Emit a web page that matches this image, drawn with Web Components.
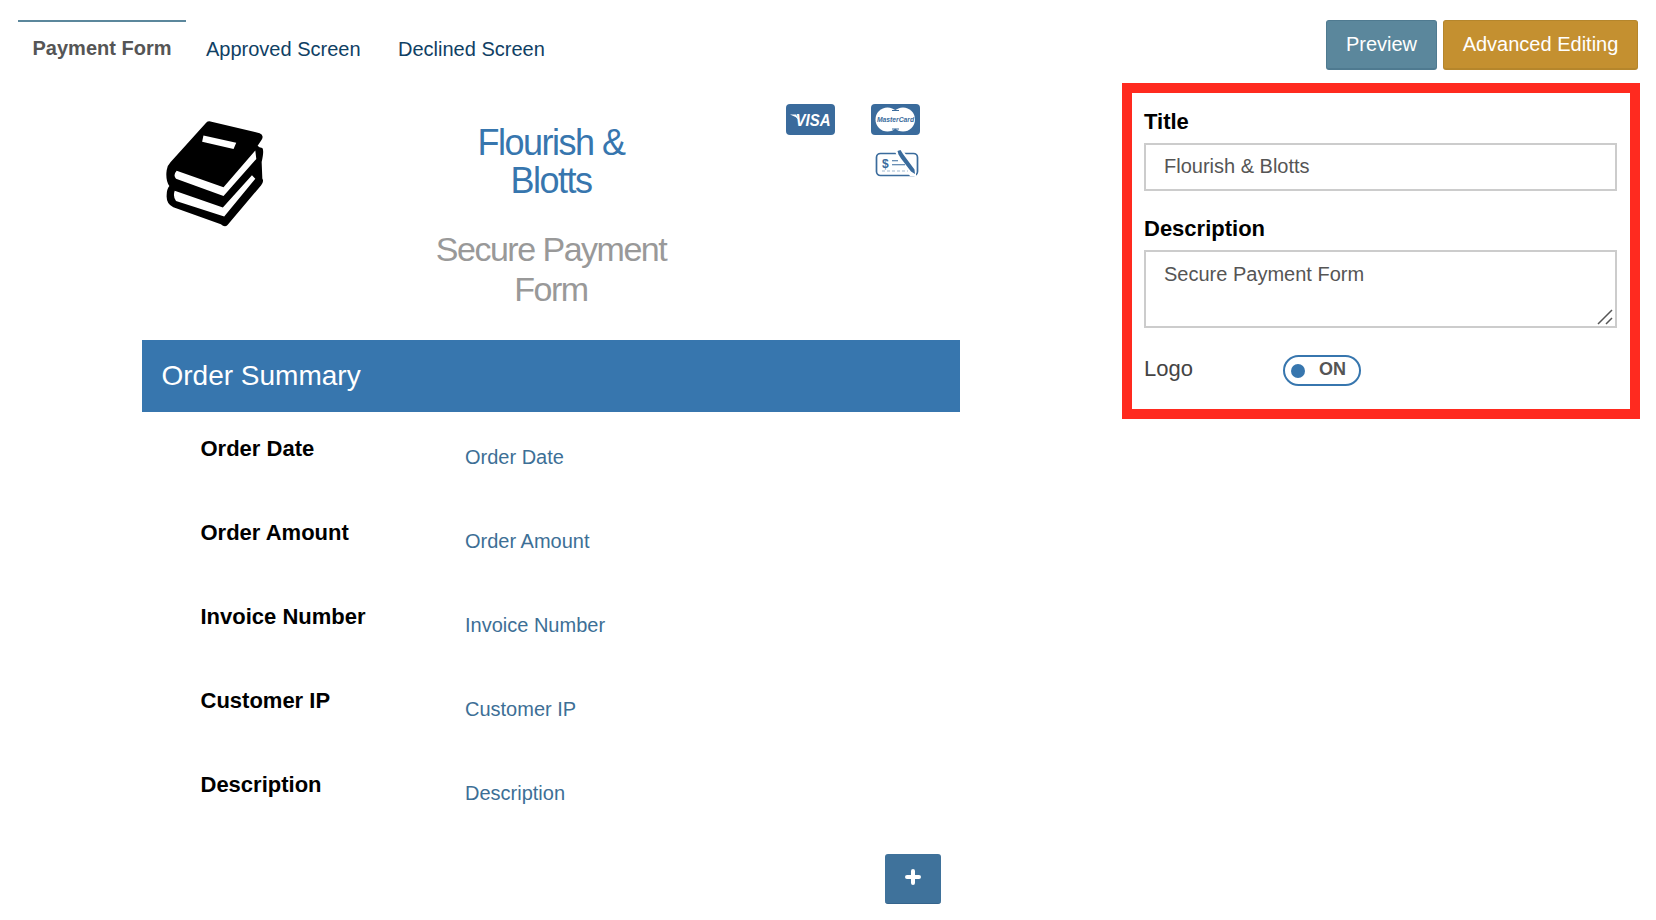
<!doctype html>
<html><head><meta charset="utf-8">
<style>
html,body{margin:0;background:#fff}
body{font-family:"Liberation Sans",Arial,sans-serif;width:1656px;height:920px;overflow:hidden}
</style></head>
<body>
<app-page></app-page>
<script>
function def(name, css, html){
  customElements.define(name, class extends HTMLElement{
    constructor(){super();const r=this.attachShadow({mode:'open'});
      r.innerHTML='<style>'+css+'</style>'+(typeof html==='function'?html(this):html);}
  });
}
def('top-bar',`:host{display:flex;justify-content:space-between;align-items:flex-start;height:83px;box-sizing:border-box;padding:20px 18px 0 18px}`,
`<tab-nav></tab-nav><action-buttons></action-buttons>`);
def('tab-nav',`:host{display:flex;font-size:20px;color:#0f4064;white-space:nowrap}
a{display:block;height:48px;box-sizing:border-box;line-height:27px}
.on{width:168px;border-top:2px solid #5b879c;color:#555;font-weight:bold;text-align:center;padding-top:13px;margin-right:20px;font-size:20px}
.b{margin-left:37.500px;padding-top:16px}.a{padding-top:16px}`,
`<a class="on">Payment Form</a><a class="a">Approved Screen</a><a class="b">Declined Screen</a>`);
def('action-buttons',`:host{display:flex;gap:6px}
button{font:20px "Liberation Sans",Arial,sans-serif;color:#fff;height:50px;border-radius:3px;padding:0;box-sizing:border-box}
.p{width:111px;background:#5b879c;border:1px solid #4f7a90;border-bottom-width:2px}
.a{width:195px;background:#c49030;border:1px solid #b5862c;border-bottom-width:2px}`,
`<button class="p">Preview</button><button class="a">Advanced Editing</button>`);
def('brand-logo',`:host{display:block;padding:37px 0 0 24px}svg{display:block}`,
`<svg width="99" height="107" viewBox="78 58 296 324" preserveAspectRatio="none"><path fill="#000" fill-rule="evenodd" d="M198 66Q204 60 214 63L358 98Q372 103 364 118L352 136Q356 142 366 143Q372 150 364 185L366 235Q372 244 362 256L262 376Q254 384 242 374L100 322Q78 312 80 285Q80 268 88 258Q76 240 80 210Q82 195 92 185ZM110 212L250 262L345 150L348 176L250 288L108 236Q98 225 110 212ZM104 272L248 323L335 225L345 236L252 350L108 303Q98 290 104 272ZM190 105L288 127L280 146L186 124Z"/></svg>`);
def('pay-icons',`:host{display:grid;grid-template-columns:49px 49px;column-gap:36px;row-gap:14px;padding:21px 0 0 99px;align-content:start;justify-items:center}
svg{display:block;overflow:visible}.c{justify-self:end;margin-right:1px}`,
`<svg width="49" height="31" viewBox="0 0 49 31"><rect width="49" height="31" rx="4" fill="#3a6b9c"/><path d="M4 10.500H10L13 16Q9 12 4 10.500Z" fill="#fff"/><text x="9.500" y="22" font-family="Liberation Sans" font-weight="bold" font-style="italic" font-size="16" fill="#fff" textLength="35" lengthAdjust="spacingAndGlyphs">VISA</text></svg>
<svg width="49" height="31" viewBox="0 0 49 31"><rect width="49" height="31" rx="4" fill="#3a6b9c"/><circle cx="16.500" cy="15.500" r="12" fill="#fff"/><circle cx="32" cy="15.500" r="12" fill="#fff"/><path d="M21 6.500H28M21 25H28" stroke="#3a6b9c" stroke-width="1"/><text x="6" y="18" font-family="Liberation Sans" font-weight="bold" font-style="italic" font-size="7.400" fill="#3a6b9c" textLength="37" lengthAdjust="spacingAndGlyphs">MasterCard</text></svg>
<span></span>
<svg class="c" width="44" height="28" viewBox="0 0 44 28"><rect x="1.500" y="4.500" width="41" height="22" rx="4" fill="#fff" stroke="#3a6b9c" stroke-width="1.700"/><path d="M19 0H27L41 20V27H35L24 12Z" fill="#fff"/><path d="M22.500 2L25.500 1L28 5L39.500 20.500L40 25L36 22.500L26 9.500L23.500 5.500Z" fill="#3a6b9c"/><text x="7" y="19" font-family="Liberation Sans" font-weight="bold" font-size="12" fill="#3a6b9c">$</text><path d="M17 11.700H23M17 15.700H30" stroke="#3a6b9c" stroke-width="1.100"/><path d="M7 22H33" stroke="#9db7cf" stroke-width="1" stroke-dasharray="3 2"/></svg>`);
def('brand-title',`:host{display:block;text-align:center;padding-top:40.500px}
h1{margin:0;font-weight:normal;font-size:36px;line-height:38.500px;color:#3776ae;letter-spacing:-1.500px}
h2{margin:28.500px 0 0;font-weight:normal;font-size:34px;line-height:40px;color:#999;letter-spacing:-1.500px}`,
`<h1>Flourish &amp;<br>Blotts</h1><h2>Secure Payment<br>Form</h2>`);
def('form-head',`:host{display:grid;grid-template-columns:repeat(3,1fr);height:257px}`,
`<brand-logo></brand-logo><brand-title></brand-title><pay-icons></pay-icons>`);
def('section-bar',`:host{display:flex;align-items:center;height:72px;box-sizing:border-box;padding:0 0 1px 19.500px;background:#3776ae;color:#fff;font-size:28px}`,`<slot></slot>`);
def('summary-row',`:host{display:grid;grid-template-columns:264px 1fr;height:84px;box-sizing:border-box;padding:22px 0 0 59px}
.l{font-weight:bold;font-size:22px;line-height:30px;color:#000;margin-left:-.5px}.v{font-size:20px;line-height:30px;color:#3d6f96;padding-top:8px}`,
el=>`<div class="l">${el.getAttribute('label')}</div><div class="v">${el.getAttribute('label')}</div>`);
def('add-button',`:host{display:flex;justify-content:flex-end;padding:22px 19px 0 0}
button{width:56px;height:50px;background:#3f729b;border:0;border-bottom:1px solid #35648c;border-radius:3px;padding:0 0 3px;display:flex;align-items:center;justify-content:center}`,
`<button aria-label="Add"><svg width="16" height="16" viewBox="0 0 16 16"><path d="M8 2V14M2 8H14" stroke="#fff" stroke-width="4" stroke-linecap="round"/></svg></button>`);
def('text-box',`:host{display:block;box-sizing:border-box;border:2px solid #ccc;background:#fff;font-size:20px;color:#555;padding:9px 18px;line-height:26px;position:relative}
:host(.i){padding-top:8px}
svg{position:absolute;right:2px;bottom:1px}`,
el=>`<slot></slot>`+(el.hasAttribute('resize')?`<svg width="16" height="16" viewBox="0 0 16 16"><path d="M1 15L15 1M9 15L15 9" stroke="#555" stroke-width="1.500" fill="none"/></svg>`:''));
def('on-toggle',`:host{display:flex;align-items:center;box-sizing:border-box;width:78px;height:31px;border:2px solid #3776ae;border-radius:16px;padding-left:6px;background:#fff;font-weight:bold;font-size:18px;color:#555}
i{width:14px;height:14px;border-radius:50%;background:#3776ae;display:block;margin-right:14px}span{padding-bottom:2px}`,
`<i></i><span>ON</span>`);
def('edit-panel',`:host{display:block;box-sizing:border-box;width:518px;height:336px;border:10px solid #ff2a1f;padding:16px 13px 0 12px;background:#fff}
.t{font-weight:bold;font-size:22px;line-height:26px;color:#000;margin-bottom:8px}
.g{margin-top:25px}
text-box.i{height:48px}text-box.a{height:78px}
.r{display:flex;align-items:center;margin-top:27px;font-size:22px;color:#444}
.r span{width:139px;padding-bottom:3px}`,
`<div class="t">Title</div><text-box class="i">Flourish &amp; Blotts</text-box>
<div class="t g">Description</div><text-box class="a" resize>Secure Payment Form</text-box>
<div class="r"><span>Logo</span><on-toggle></on-toggle></div>`);
def('payment-form',`:host{display:block;width:818px}`,
`<form-head></form-head><section-bar>Order Summary</section-bar>
<summary-row label="Order Date"></summary-row><summary-row label="Order Amount"></summary-row><summary-row label="Invoice Number"></summary-row><summary-row label="Customer IP"></summary-row><summary-row label="Description"></summary-row>
<add-button></add-button>`);
def('app-page',`:host{display:block}
.m{display:grid;grid-template-columns:818px 518px;column-gap:162px;padding-left:142px;align-items:start}`,
`<top-bar></top-bar><div class="m"><payment-form></payment-form><edit-panel></edit-panel></div>`);
</script>
</body></html>
